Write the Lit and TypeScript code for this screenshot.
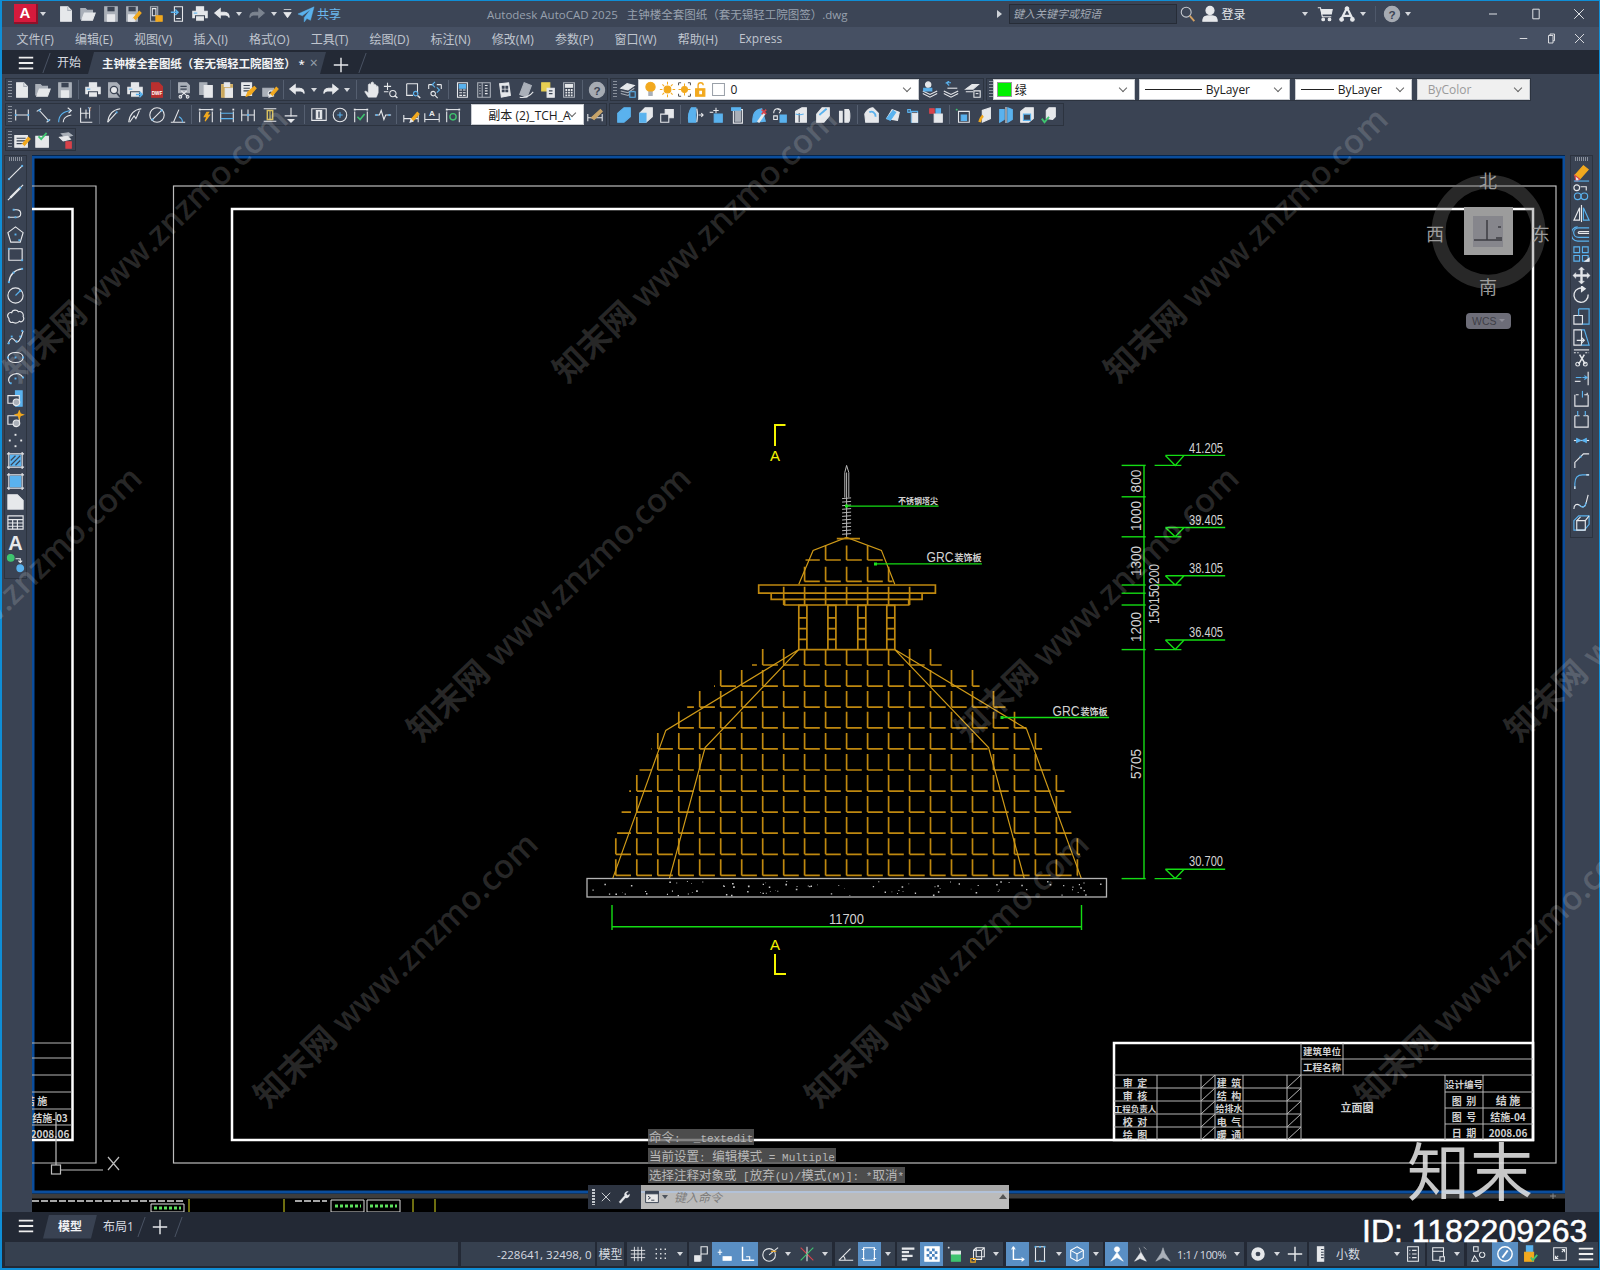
import { LitElement, html, svg, css } from 'lit'
import { customElement } from 'lit/decorators.js'

const L = '#e6e8eb'
const M = '#aab0b9'
const B = '#5ab2ee'
const O = '#f2a91e'
const R = '#d8424a'
const N = '#3fc46f'
const K = '#3a4353'

const p = (d: string, stroke = L, fill = 'none', w = 1.2) =>
  svg`<path d=${d} stroke=${stroke} fill=${fill} stroke-width=${w} />`
const c = (x: number, y: number, r: number, stroke = L, fill = 'none', w = 1.2) =>
  p(`M${x - r} ${y}a${r} ${r} 0 1 0 ${2 * r} 0a${r} ${r} 0 1 0 ${-2 * r} 0z`, stroke, fill, w)
const d = (x: number, y: number, col = B) => p(`M${x - 1} ${y - 1}h2v2h-2z`, 'none', col)
const dash = (dd: string, col = L) =>
  svg`<path d=${dd} stroke=${col} fill="none" stroke-width="1.2" stroke-dasharray="2 1.5" />`
const t = (x: number, y: number, s: string, size = 5, col = '#fff') =>
  svg`<text x=${x} y=${y} font-size=${size} fill=${col} text-anchor="middle" font-family="Liberation Sans" font-weight="700">${s}</text>`

const page = (col = L) => p('M4 2h8l4 4v12H4z', col, col)
const pen = [p('M10 15l7-8 2 2-7 8z', O, O), p('M10 15l-1 3 3-1z', L, L)]
const printer = [p('M6 2h8v5H6z', L, L), p('M2 7h16v7H2z', L, L), p('M5 12h10v6H5z', K, L), p('M3 9h4', B)]
const frame = [p('M3 6v12M17 6v12', L), d(3, 4, L), d(17, 4, L)]

const I: Record<string, unknown> = {
  new: [page(), p('M12 2v4h4', M)],
  open: [p('M2 16V4h5l2 2h6v3', M, M), p('M3 17l3-8h12l-3 8z', L, L)],
  save: [p('M3 2h14v16H3z', M, M), p('M6 2h8v5H6z', 'none', K), p('M6 11h8v7H6z', L, L)],
  saveas: [p('M3 2h12v16H3z', M, M), p('M5 2h8v5H5z', 'none', K), p('M5 11h7v7H5z', L, L), pen],
  cloudopen: [p('M5 2h8v16H5z', M, K), p('M7 4h4v8H7z', L), p('M11 12h7v6h-7z', O, O)],
  cloudsave: [p('M6 2h9v16H6z', L, K), p('M2 8h8M7 5l3 3-3 3', B, 'none', 1.6), p('M8 15h5', L)],
  print: printer,
  preview: [p('M4 2h9l3 3v13H4z', M, M), c(10, 10, 4, K, L, 1.4), p('M13 13l4 5', K, 'none', 2)],
  plot: [printer, p('M11 15h7M15 12l3 3-3 3', B, 'none', 1.6)],
  dwf: [p('M4 2h8l4 4v12H4z', '#b9302f', '#b9302f'), t(10, 15, 'DWF', 5.2)],
  cut: [p('M4 2h9l3 3v8H4z', M, M), p('M6 6h7M6 9h7', K), p('M7 11l7 6M13 11l-7 6', L), c(6, 17.5, 1.5), c(14, 17.5, 1.5)],
  copy: [p('M3 2h8v13H3z', M, M), p('M8 5h9v13H8z', L, L)],
  paste: [p('M4 4h12v14H4z', '#d6b36a', '#c8a55a'), p('M7 2h6v4H7z', L, L), p('M8 8h8v10H8z', L, L)],
  match: [p('M3 2h11v14H3z', L, L), p('M5 5h7M5 8h7M5 11h7', K), p('M8 17l2-5 7-6 2 2-6 7z', O, O)],
  matchprop: [p('M2 8h12v9H2z', M, M), c(11, 14, 3, L, K), pen],
  undo: p('M8 4L2 9l6 5v-3h6c2 0 3 1 4 3 0-4-2-6-5-6H8z', L, L),
  redo: p('M12 4l6 5-6 5v-3H6c-2 0-3 1-4 3 0-4 2-6 5-6h5z', L, L),
  redodim: p('M12 4l6 5-6 5v-3H6c-2 0-3 1-4 3 0-4 2-6 5-6h5z', '#7c8490', '#7c8490'),
  pan: p('M7 18l-4-6 1-1 3 2V4l1.500-1L10 4V2l1.500-1L13 2v2l1.500-.5L16 5v1l1.500-.5L18 7v6l-2 5z', L, L, .6),
  zoomrt: [p('M5 2v8M1 6h8M1 12h5', L), c(11, 14, 3.500), p('M13 16l3 3', L, 'none', 1.6)],
  zoomwin: [p('M3 3h12v11', L), p('M3 3v13h7', L), c(13, 14, 2.500, B), p('M15 16l3 3', L, 'none', 1.6)],
  zoomprev: [p('M3 4h5M12 4h5M3 4v5M17 4v5', L), p('M10 1l-3 3 3 3M12 7l3 3-3 3', B), c(8, 14, 2.500), p('M10 16l3 3', L)],
  props: [p('M5 2h11v16H5z', L, K), p('M7 4h7v4H7z', B, B), p('M7 10h3M11 10h3M7 13h3M11 13h3M7 16h3M11 16h3', L)],
  dc: [p('M3 2h14v16H3z', M, K), p('M8 2v16', M), p('M5 5h1M5 8h1M5 11h1M5 14h1M11 5h3M11 8h3M11 11h3M11 14h3', L)],
  palette: [p('M4 3l10-1 2 14-10 2z', L, L), p('M7 6h2v2H7zM11 6h2v2h-2zM7 10h2v2H7zM11 10h2v2h-2z', K, K)],
  sheet: [p('M3 15L8 2l8 3-5 13z', M, M), p('M3 18c6 1 11-1 15-6', L)],
  markup: [p('M3 2h9v9H3z', '#e8cf52', '#e8cf52'), p('M9 8h8v10H9z', L, L), p('M11 11h4M11 14h4', K)],
  calc: [p('M4 2h12v16H4z', M, K), p('M6 4h8v3H6z', L, L), p('M6 9h2v2H6zM9 9h2v2H9zM12 9h2v2h-2zM6 12h2v2H6zM9 12h2v2H9zM12 12h2v2h-2zM6 15h2v2H6zM9 15h2v2H9zM12 15h2v2h-2z', 'none', L)],
  help: [c(10, 10, 8.500, '#a6abb3', '#a6abb3'), t(10, 15, '?', 13, K)],
  layerprops: [p('M2 8l7-5 8 2-7 5z', L, L), p('M2 11l8 2 7-5', M), p('M2 14l8 2 7-5', M), p('M12 12h6v6h-6z', B, K)],
  dimlin: [p('M3 4v12M17 4v12M3 10h14', L), d(3, 10), d(17, 10)],
  dimali: [p('M3 6l5-3M14 18l4-3M6 5l10 11', L), d(6, 5), d(16, 16)],
  dimarc: [p('M3 18c0-8 4-12 14-13', B), p('M8 18c0-4 3-7 9-8', L), p('M13 2l4 3-3 3', L)],
  dimord: [p('M4 2v16h13M4 8h9M10 4v10M14 4v10', L), t(14, 6, 'Y', 5, L)],
  dimrad: [p('M3 18C4 9 9 4 17 3', L), p('M3 18L13 7', L), d(13, 7)],
  dimjog: [p('M3 18C4 9 9 4 17 3', L), p('M4 18l5-7 2 3 4-9', L)],
  dimdia: [c(10, 10, 8), p('M4 16L16 4', L), d(5, 15), d(15, 5)],
  dimang: [p('M2 18h16M5 18L11 4', L), p('M15 18c0-3-2-5-4-6', B)],
  dimqk: [frame, p('M3 4h14', L), p('M11 7l-3 5h3l-2 5 5-7h-3l2-3z', O, O)],
  dimbase: [frame, p('M3 8h14M3 14h14', B)],
  dimcont: [p('M3 4v13M10 4v13M17 4v13M3 10h14', L), d(10, 10)],
  dimspace: [p('M3 3h14M3 17h14', L), p('M7 5h6v10H7z', '#d9c05e', 'none', 1.6), p('M10 5v10', '#d9c05e')],
  dimbreak: [p('M10 2v10M3 11h14M7 15h6l-3 3z', L, L)],
  tol: [p('M2 3h16v13H2z', L), p('M7 5h6v9H7z', L, L), p('M10 6v7', K, 'none', 1.500)],
  center: [c(10, 10, 7.500), p('M10 7v6M7 10h6', B)],
  inspect: [frame, p('M3 4h14', L), p('M6 12l3 3 5-6', N, 'none', 1.800)],
  jog: [p('M1 10h5l2-5 3 10 2-5h6', L), d(3, 10), d(17, 10)],
  dimedit: [p('M2 10v8M18 10v8M2 14h16', L), pen],
  dimtedit: [p('M2 8v10M18 8v10M2 15h16', L), t(10, 11, 'A', 9, L)],
  dimupd: [frame, p('M3 4h14', L), c(10, 12, 3.500, N, 'none', 1.500)],
  dimstyle: [p('M2 9v8M18 9v8M2 13h16', L), p('M6 13l10-9 2 2-9 9z', '#c9a56a', '#c9a56a')],
  wrench: p('M3 17l8-9c-1-3 1-6 5-6l-3 3 2 3 3-2c0 4-3 6-6 5l-7 8z', L, L, .6),
  solid1: [p('M3 18V8l7-6h7v10l-7 6z', B, B)],
  solid2: [p('M3 18V8l6-6h8v10l-7 6z', L, L), p('M3 18V8h7v10z', B, B)],
  solid3: [p('M8 13V4h9v9z', L, L), p('M3 18V9h9v9z', L, K)],
  sect1: [p('M3 18c-1-8 0-12 3-16h5v16z', B, B), p('M12 3c1 4 1 10 0 15', L), p('M14 10h5M17 8l2 2-2 2', L)],
  sect2: [p('M10 2v6M7 5h6', L), p('M8 9h9v9H8z', B, B), p('M3 7h4', L)],
  sect3: [p('M6 4h10v15H6z', L), p('M4 2h10v3H4z', B, B), p('M8 6h6v11H8z', M, M)],
  sect4: [p('M3 18C3 8 6 4 13 3l4 14z', B, B), p('M9 18l7-10', L, L, 3), p('M13 4l5 5M18 4l-5 5', R, 'none', 1.8)],
  sect5: [p('M3 8c0-6 7-6 8-3', L), p('M7 3l4 2-2 3', L), p('M10 10h7v8h-7z', B, B), p('M3 11h4v4H3z', L)],
  sect6: [p('M4 18V6l7-4h5v16z', L, L), p('M8 18V8', K), p('M4 9c3 1 6 1 9 0', B)],
  sect7: [p('M3 18V9l6-7h8v9l-6 7z', L, L), p('M6 10l8-7', B, 'none', 2)],
  sect8: [p('M5 18V6h3v12zM11 18V4h4c2 2 2 12 0 14z', L, L)],
  sect10: [p('M3 18L2 9c2-4 5-7 9-7l6 6v10z', L, L), p('M7 7c3-2 7 0 7 5', B, 'none', 2)],
  sect11: [p('M3 14l6-10 8 3-2 9z', L, L), p('M3 14l7-9 3 2-6 9z', B, B)],
  sect12: [p('M3 7V4h3v3zM7 6h7v12H7z', B), p('M8 8h6v10H8z', L, L), p('M3 7h3', B)],
  sect13: [p('M3 3h5v5H3z', R, R), p('M10 3h5v5h-5z', B, B), p('M8 9h9v9H8z', L, L)],
  face1: [p('M2 4h2M3 3v2', N), p('M5 6h12v12H5z', L, K), p('M8 10h6v6H8z', B, B)],
  face2: [p('M7 18V5l9-3v12z', L, L), p('M4 18c1-4 2-6 4-7', O, 'none', 3)],
  face3: [p('M3 4v14l5-3V4zM12 2v16l5-3V4z', B, B), p('M10 1v18', L)],
  face4: [p('M3 6l5-4h9v12l-5 4H3z', L, L), p('M6 9h8v7H6z', B, K)],
  face5: [p('M7 14V5l3-3h7v10l-3 3z', L, L), p('M2 14l3 4 5-6', N, 'none', 2)],
  edit1: [p('M2 5h14v13H2z', L, L), p('M4 8h10M4 11h10M4 14h10', K), pen],
  edit2: [p('M2 6h7v12H2zM9 6h7v12H9z', L, L), p('M5 6l3 3 6-7', N, 'none', 2)],
  edit3: [p('M6 3l8-1 4 3-8 2z', M, M), p('M4 7l9-1 3 3-8 2z', L, L), p('M11 12h6v7h-6z', R, R)],
  line: [p('M3 17L17 3', L), d(3, 17), d(17, 3)],
  xline: [p('M2 18l4-4M14 6l4-4', L), p('M5 15l10-10', L, 'none', 2.4), d(5, 15, L), d(15, 5, B)],
  pline: [p('M2 14h9c6 0 6-8 0-8H8', L), d(3, 14), d(10, 14), d(8, 6)],
  polygon: [p('M10 2l8 6-3 10H5L2 8z', L), d(10, 10), d(14, 16)],
  rect: [p('M3 4h14v12H3z', L), d(3, 4), d(17, 16)],
  arc: [p('M3 17C4 9 9 4 17 3', L), d(3, 17), d(8, 7), d(17, 3)],
  circle: [c(10, 10, 8), p('M10 10l5-5', B), d(15, 5)],
  cloud: p('M3 12c-3-3 0-7 3-6 1-4 6-3 7-1 3-1 6 2 5 5 2 3-1 7-4 5-2 3-6 2-7 1-2 1-4-1-4-4z', L),
  spline: [p('M2 17c3-9 6-6 8-3s6-2 8-11', L), d(3, 16), d(6, 9), d(11, 14), d(15, 9), d(17, 3)],
  ellipse: [p('M2 10c0-7 16-7 16 0s-16 7-16 0z', L), d(2, 10), d(18, 10), d(10, 10)],
  ellarc: [p('M4 15c-4-6 3-11 9-10 3 1 4 2 5 4', L), d(5, 15), d(18, 9), d(10, 10)],
  insert: [p('M10 2h7v16h-7z', B, B), p('M2 7h12v8H2z', L, K), c(11, 14, 3.500, L, M)],
  block: [p('M2 6h12v9H2z', L, K), c(11, 14, 3.500, L, M), p('M14 1l1 3 3 1-3 1-1 3-1-3-3-1 3-1z', O, O)],
  point: [d(10, 4, L), d(4, 10, L), d(16, 10, L), d(10, 16, L)],
  hatch: [p('M3 1v18M17 1v18M1 3h18M1 17h18', L), p('M4 4h12v12H4z', 'none', B), p('M5 15L15 5M5 10l5-5M10 15l5-5', K)],
  gradient: [p('M3 1v18M17 1v18M1 3h18M1 17h18', L), p('M4 4h12v12H4z', 'none', B)],
  region: p('M2 3h10l6 6v9H2z', L, L),
  table: [p('M2 3h16v14H2z', L), p('M2 7h16M2 10.500h16M2 14h16M7 7v10M12 7v10', L)],
  mtext: t(10, 18, 'A', 21, L),
  addsel: [c(5, 4, 3.500, N, N), p('M10 5h5v4M13 7l2 2 2-2', L), c(15, 15, 3.500, B, B)],
  erase: [p('M3 13l9-10 5 4-9 10z', O, O), p('M3 13l5 4-2 2H4z', R, L), p('M2 19h16', B)],
  copyobj: [c(5, 5, 3), p('M9 4h6v4', L), c(6, 14, 3.500, B), c(13, 14, 3.500, B)],
  mirror: [p('M2 17L8 4v13z', L), p('M12 4l6 13h-6z', B), p('M10 1v18', L)],
  offset: [p('M18 3H7c-7 0-7 10 0 10h11', B), p('M18 7H8c-2 0-2 2 0 2h10', L), p('M18 17H6c-9 0-9-15 0-15', B)],
  array: [p('M2 2h6v6H2zM11 2h6v6h-6zM2 11h6v6H2zM11 11h6v6h-6z', B), p('M14 17h4v-3z', L, L)],
  move: p('M10 1l3 3h-2v5h5V7l3 3-3 3v-2h-5v5h2l-3 3-3-3h2v-5H4v2l-3-3 3-3v2h5V4H7z', L, L, .5),
  rotate: [p('M13 3A7.500 7.500 0 1 0 17 9', L, 'none', 1.4), p('M10 0l4 3-4 3z', L, L)],
  scale: [p('M2 9h9v9H2z', L), p('M7 2h11v16H11', B), p('M7 2v7', B)],
  stretch: [p('M2 2h8v16H2z', L), p('M10 2h3l5 16h-8', B), p('M5 13h8M10 10l3 3-3 3', L)],
  trim: [p('M2 2h16', L), dash('M2 5h5M14 5h4', L), p('M8 7l6 10M13 7L7 17', L, 'none', 1.6), c(6, 17, 2), c(14, 17, 2)],
  extend: [p('M17 3v14', L), p('M3 13h6', L), p('M4 9h6M11 9l5 0M13 7l3 2-3 2', B)],
  breakp: [p('M4 6h3M13 6h3V4', L), p('M3 6v12h14V6', L), p('M11 2v7', B)],
  breakl: [p('M3 6h5M12 6h5M3 6v12h14V6', L), p('M6 6V1M14 6V1', B)],
  join: [p('M2 10h16', L), p('M5 8l4 2-4 2zM15 8l-4 2 4 2z', B, B)],
  chamfer: [p('M18 3h-6L3 12v6', L), d(9, 6, B)],
  fillet: [p('M18 3h-7C6 3 3 6 3 12v6', B), p('M15 3h3M3 15v3', L)],
  blend: [p('M2 18c0-5 3-6 6-4 3 3 6 2 7-3l2-8', L), p('M8 14c3 3 6 2 7-3', B)],
  explode: [p('M2 8l5-5h11v9l-5 6H2z', B), p('M5 8h9v10H5z', L), p('M5 8l4-4M14 8l4-5', L)],
  bulb: [c(10, 7, 5.500, O, O), p('M8 13h4v4H8z', M, M)],
  sun: [c(10, 10, 4, O, O), p('M10 1v3M10 16v3M1 10h3M16 10h3M4 4l2 2M14 14l2 2M16 4l-2 2M6 14l-2 2', O)],
  freeze: [p('M3 2h3M14 2h3M3 18h3M14 18h3M3 2v3M17 2v3M3 15v3M17 15v3', '#555'), c(10, 10, 3.500, O, O), p('M10 3v3M10 14v3M3 10h3M14 10h3', O)],
  lock: [p('M3 9h11v9H3z', O, O), p('M6 9V5c0-4 6-4 6 0', O, 'none', 1.6), p('M8 12h2v3H8z', '#fff', '#fff')],
  swatch: p('M3 3h14v14H3z', '#9aa0a8', '#fff'),
  matchlayer: [p('M2 14l8 4 8-4M2 11l8 4 8-4', L), p('M3 8h9v3H3z', B, B), c(8, 4, 3, L, L)],
  prevlayer: [p('M2 14l8 4 8-4M2 11l8 4 8-4', L), p('M10 2H5l3-2M5 2l3 3', B), p('M6 8h11', L)],
  layerstate: [p('M2 9l7-5h7l-6 5zM2 12h8', L, L), p('M11 11h7v7h-7z', L, K), p('M13 14h3', L)],
  search: [c(8, 8, 5.500, '#c5c9cf'), p('M12 12l5 6', '#d3a060', 'none', 2)],
  user: [c(10, 6, 4.500, L, L), p('M2 18c0-6 4-6 8-6s8 0 8 6z', L, L)],
  cart: [p('M2 3h3l2 10h10', L), p('M5 5h13l-1 5H6', L, L), c(8, 16, 1.500, L, L), c(15, 16, 1.500, L, L)],
  alogo: [p('M10 3L3 17M10 3l7 14M6 12h8', L, 'none', 2.400), c(10, 4, 2, L, L), c(4, 16, 2, L, L), c(16, 16, 2, L, L)],
  custom: p('M5 4h10M5 8h10l-5 7z', L, L, 1),
  share: p('M19 2L1 10l5 2 9-7-7 9v5l3-4 4 2z', B, B, .5),
  hamb: p('M2 4h16M2 10h16M2 16h16', '#eee', 'none', 2),
  min: p('M5 10h10', L, 'none', 1.2),
  max: p('M6 4h8v12H6z', L, 'none', 1.2),
  close: p('M4 4l12 12M16 4L4 16', L, 'none', 1.2),
  restore: [p('M8 6V4h6v9h-2', L), p('M6 6h6v10H6z', L)],
  plus: p('M10 2v16M2 10h16', L, 'none', 1.600),
  grid: p('M6 2v16M10 2v16M14 2v16M2 6h16M2 10h16M2 14h16', L, 'none', 1),
  snapgrid: p('M4 4h1.500v1.500H4zM9 4h1.500v1.500H9zM14 4h1.500v1.500H14zM4 9h1.500v1.500H4zM9 9h1.500v1.500H9zM14 9h1.500v1.500H14zM4 14h1.500v1.500H4zM9 14h1.500v1.500H9zM14 14h1.500v1.500H14z', 'none', L),
  mdlspace: [p('M3 12h6v6H3z', L, L), p('M10 2h7v8h-7z', L), p('M10 10v8', L)],
  snapinf: [p('M3 8h5M5.500 5v6', '#fff'), p('M9 13h9v4H9z', '#fff', '#fff')],
  ortho: [p('M5 2v15h13', '#fff', 'none', 1.6), p('M9 13h4v4', '#fff')],
  polar: [c(9, 11, 7), p('M9 11l10-8', L), p('M11 7h6', O)],
  iso: [p('M3 3l14 14', R), p('M10 2v16', L), p('M3 17l14-14', N)],
  angle: p('M2 17h16M2 17L15 4M9 17c0-3-1-4-2-5', L),
  dyn: [p('M4 3h12v14H4z', '#fff'), p('M2 5h3M2 15h3M15 5h3M15 15h3', '#fff')],
  lwt: p('M2 4h14M2 8h8M2 12h12M2 16h6', L, 'none', 2.4),
  transp: [p('M2 2h16v16H2z', '#fff', '#fff'), p('M4 4h3v3H4zM10 4h3v3h-3zM7 7h3v3H7zM13 7h3v3h-3zM4 10h3v3H4zM10 10h3v3h-3zM7 13h3v3H7zM13 13h3v3h-3z', 'none', '#4a82bd')],
  selcyc: [p('M6 7h10v11H6z', N, N), p('M2 3h2M3 2v2', L), p('M6 7h10v3H6z', L, L)],
  orbit3: [p('M8 3h9v10H8zM5 6h9v10H5zM8 3L5 6M17 3l-3 3', L), p('M2 15h5v4H2z', O)],
  ucsdyn: [p('M6 2v14h12', '#fff', 'none', 1.6), p('M6 2l2 3M6 2L4 5M18 16l-3-2M18 16l-3 2', '#fff')],
  gizmo1: [p('M5 2h10v16H5z', L), d(5, 2), d(15, 2), d(5, 18), d(15, 18), d(10, 2), d(10, 18)],
  gizmo2: [p('M10 2l7 4v8l-7 4-7-4V6z', '#fff'), p('M3 6l7 4 7-4M10 10v8', '#fff')],
  anno1: p('M10 2c2 0 3 1 3 3s-2 3-3 3-3-1-3-3 1-3 3-3zM10 8L3 18l7-4 7 4z', '#fff', '#fff', .6),
  anno2: p('M9 3l2 5-7 10 6-3 7 3-6-10M14 2l3 3', L, L, .6),
  anno3: p('M10 3l2 6 6 9-8-4-8 4 6-9z', M, M, .6),
  gear: [c(10, 10, 6, L, L, 3), c(10, 10, 2, K, K)],
  ruler: [p('M6 2h7v16H6z', L, L), p('M10 5h3M10 8h3M10 11h3M10 14h3', K)],
  quick: [p('M4 2h12v16H4z', L), p('M6 6h1M9 6h5M6 10h1M9 10h5M6 14h1M9 14h5', L)],
  ws: [p('M3 3h12v14H3z', L), p('M3 7h12', L), p('M11 13h5v5h-5z', L, K)],
  term: [p('M2 3h16v14H2z', '#3a4353', '#e8e8e8'), p('M2 3h16v3H2z', '#3a4353', '#3a4353'), p('M5 9l3 2-3 2M9 14h4', '#3a4353')],
  mon: [p('M4 2h5v5H4zM13 8a3 3 0 1 0 1 0', L), p('M5 12l-3 6h7z', L)],
  perf: [c(10, 10, 8, '#fff', 'none', 1.600), p('M7 14l6-8', '#fff', 'none', 2)],
  isolate: [p('M6 1h7v9H6z', B, B), p('M4 8h10v10H4z', O, O), p('M11 14l2 3 5-6', N, 'none', 2)],
  clean: [p('M3 3h14v14H3z', L), p('M8 12l-3 3M5 12v3h3M12 8l3-3M12 5h3v3', L)],
}

interface Row {
  readonly y: number
  readonly min: number
  readonly max: number
}

const zx = (v: number): number => +(560 + v / 2.24).toFixed(1)
const zy = (v: number): number => +(410 + v / 2.8).toFixed(1)

const lPath = (rows: readonly Row[], h: number): string => {
  const out: string[] = []
  for (const r of rows) {
    for (let k = -10; k < 15; k++) {
      const vx = 548 + 47 * k
      const a = Math.max(vx, r.min)
      const b = Math.min(vx + 34, r.max)
      if (a < b) out.push(`M${zx(a)} ${zy(r.y)}H${zx(b)}`)
      if (vx >= r.min && vx <= r.max) out.push(`M${zx(vx)} ${zy(r.y - h)}V${zy(r.y)}`)
    }
  }
  return out.join('')
}

const DOME_ROWS: readonly Row[] = [
  { y: 714, min: 430, max: 855 },
  { y: 773, min: 345, max: 940 },
  { y: 832, min: 285, max: 998 },
  { y: 890, min: 265, max: 1045 },
  { y: 949, min: 205, max: 1080 },
  { y: 1008, min: 178, max: 1100 },
  { y: 1067, min: 155, max: 1130 },
  { y: 1126, min: 138, max: 1145 },
  { y: 1185, min: 128, max: 1158 },
  { y: 1244, min: 124, max: 1165 },
  { y: 1303, min: 124, max: 1160 },
]
const CAP_ROWS: readonly Row[] = [
  { y: 420, min: 550, max: 735 },
  { y: 480, min: 548, max: 745 },
]

const poly = (pts: ReadonlyArray<readonly [number, number]>): string =>
  pts.map(([x, y], i) => `${i ? 'L' : 'M'}${zx(x)} ${zy(y)}`).join('')

const box = (a: number, b: number, y1: number, y2: number): string =>
  `M${zx(a)} ${zy(y1)}H${zx(b)}V${zy(y2)}H${zx(a)}Z`

const ledgeTicks = (): string => {
  let s = ''
  for (let k = 0; k < 7; k++) {
    const x = 501 + 47 * k
    s += `M${zx(x)} ${zy(495)}V${zy(546)}`
  }
  return s
}

const columnPath = (): string => {
  let s = `M${zx(535)} ${zy(671)}H${zx(750)}`
  for (const x of [535, 600, 667, 732]) {
    s += box(x, x + 18, 547, 671)
    for (const y of [582, 612, 642]) s += `M${zx(x)} ${zy(y)}H${zx(x + 18)}`
  }
  return s
}

const spirePath = (): string => {
  let s = `M${zx(642)} ${zy(155)}L${zx(638)} ${zy(175)}V${zy(245)}M${zx(642)} ${zy(155)}L${zx(647)} ${zy(175)}V${zy(245)}M${zx(642)} ${zy(175)}V${zy(355)}`
  for (let y = 248; y < 355; y += 10) s += `M${zx(632)} ${zy(y)}L${zx(652)} ${zy(y - 2)}`
  return s
}

const speckles = (): string => {
  let seed = 71
  const next = () => (seed = (seed * 1103 + 12345) % 65536) / 65536
  let s = ''
  for (let i = 0; i < 90; i++) {
    const x = 590 + next() * 512
    const y = 881 + next() * 14
    const w = 0.6 + next() * 1.1
    s += `M${x.toFixed(1)} ${y.toFixed(1)}h${w.toFixed(1)}v${w.toFixed(1)}h${(-w).toFixed(1)}z`
  }
  return s
}

const cadText = (x: number, y: number, s: string, len: number, size = 14, rot = false) =>
  svg`<text class="cad" x=${x} y=${y} font-size=${size} textLength=${len} lengthAdjust="spacingAndGlyphs"
    transform=${rot ? `rotate(-90 ${x} ${y})` : ''} text-anchor="middle" dominant-baseline="central">${s}</text>`

const cjk = (x: number, y: number, s: string, size = 10) =>
  svg`<text class="tbt" x=${x} y=${y} font-size=${size}>${s}</text>`

const ELEV: ReadonlyArray<readonly [string, number, number]> = [
  ['41.205', 127, 155],
  ['39.405', 329, 355],
  ['38.105', 464, 490],
  ['36.405', 644, 671],
  ['30.700', 1286, 1312],
]

const WATERMARKS: ReadonlyArray<readonly [number, number]> = [
  [154, 253], [703, 253], [1254, 253],
  [8, 612], [557, 612], [1105, 612], [1655, 612],
  [404, 978], [955, 978], [1505, 978],
]

const TITLE_GRID =
  'M1301 1043V1140M1343 1043V1075M1301 1059H1533M1114 1075H1533' +
  'M1114 1088H1301M1114 1101H1301M1114 1114H1301M1114 1127H1301' +
  'M1157 1075V1140M1201 1075V1140M1215 1075V1140M1243 1075V1140M1287 1075V1140' +
  'M1445 1075V1140M1483 1075V1140M1445 1092H1533M1445 1108H1533M1445 1124H1533' +
  'M1201 1088L1215 1075M1201 1101L1215 1088M1201 1114L1215 1101M1201 1127L1215 1114M1201 1140L1215 1127' +
  'M1287 1088L1301 1075M1287 1101L1301 1088M1287 1114L1301 1101M1287 1127L1301 1114M1287 1140L1301 1127'

const drawing = () => svg`
  <rect x="32" y="155" width="1533" height="1057" fill="#000" />
  <path d="M32 1196H1565" stroke="#3d3d3d" stroke-width="5" />
  <path d="M1553 1193v6M1550 1196h6" stroke="#888" />
  <path d="M32 1201H184M295 1201H327" stroke="#ddd" stroke-width="1.500" stroke-dasharray="7 2" />
  <path d="M151 1204h33v8h-33zM331 1200h33v12h-33zM367 1200h33v12h-33z" stroke="#ddd" fill="none" />
  <path d="M154 1208h27M335 1206h26M370 1206h27" stroke="#5de05d" stroke-width="3" stroke-dasharray="3 2" />
  <path d="M189 1199v13M284 1199v13M413 1199v13M435 1199v13" stroke="#dddd20" />
  <rect x="33" y="157" width="1531" height="1035" fill="none" stroke="#0a4d9c" stroke-width="3" />

  <g clip-path="url(#vp)">
    <rect x="173.500" y="186" width="1382.500" height="977" class="thin" />
    <rect x="232" y="209" width="1301" height="931" class="thick" />
    <path d="M20 186H96V1163H20" class="thin" />
    <path d="M20 209H72.500V1140H20" class="thick" />
    <path class="thinner" d="M20 1043H72M20 1058H72M20 1075H72M20 1092H72M20 1109H72M20 1125H72" />
    ${cjk(36, 1100, '结 施', 10)}
    ${cjk(50, 1117, '结施-03', 10)}
    ${cjk(50, 1133, '2008.06', 10)}
    <path class="thin" d="M56 1112V1165M61 1170H103" />
    <rect x="51.500" y="1165" width="9" height="9" class="thin" />
    <path class="thin" d="M108 1157l11 13M119 1157l-11 13" />

    <rect x="1114" y="1043" width="419" height="97" class="thick" stroke-width="2" />
    <path class="thinner" d=${TITLE_GRID} />
    ${cjk(1322, 1051, '建筑单位', 9.500)}
    ${cjk(1322, 1067, '工程名称', 9.500)}
    ${['审  定', '审  核', '工程负责人', '校  对', '绘  图'].map((s, i) => cjk(1135, 1082 + i * 13, s, i === 2 ? 8.5 : 10))}
    ${['建  筑', '结  构', '给排水', '电  气', '暖  通'].map((s, i) => cjk(1229, 1082 + i * 13, s, i === 2 ? 9 : 10))}
    ${cjk(1357, 1107, '立面图', 11)}
    ${cjk(1464, 1084, '设计编号', 9.500)}
    ${cjk(1464, 1100, '图  别', 10)}
    ${cjk(1464, 1116, '图  号', 10)}
    ${cjk(1464, 1132, '日  期', 10)}
    ${cjk(1508, 1100, '结 施', 11)}
    ${cjk(1508, 1116, '结施-04', 10)}
    ${cjk(1508, 1132, '2008.06', 10)}

    <!-- section marks -->
    <path d="M785.500 425H775V446M775 954V974H786" stroke="#f4f400" stroke-width="2" fill="none" />
    <text class="sec" x="775" y="461">A</text>
    <text class="sec" x="775" y="950">A</text>

    <!-- dome -->
    <path d=${lPath(DOME_ROWS, 45)} class="brick" />
    <path d=${lPath(CAP_ROWS, 41)} class="brick" />
    <path d=${ledgeTicks()} class="brick" />
    <path d=${columnPath()} class="brick" />
    <path class="brick" d=${box(445, 841, 490, 513) + box(473, 811, 513, 530) + box(503, 781, 530, 546)} />
    <path class="roof" d=${poly([[535, 488], [567, 393], [642, 357], [720, 393], [750, 488]])} />
    <path class="roof" d=${poly([[118, 1312], [237, 897], [535, 671]]) + poly([[245, 1312], [325, 945], [535, 671]])} />
    <path class="roof" d=${poly([[750, 671], [1045, 893], [1168, 1312]]) + poly([[750, 671], [960, 945], [1040, 1312]])} />
    <path d=${spirePath()} stroke="#b8b8b8" stroke-width="1" fill="none" />
    <path d=${`M${zx(620)} ${zy(360)}H${zx(672)}`} class="brick" />

    <!-- slab -->
    <rect x="587" y="878.500" width="519.500" height="18.500" fill="none" stroke="#b4b4b4" stroke-width="1.300" />
    <path d=${speckles()} fill="#c4c4c4" />

    <!-- dims -->
    <path class="dim" d=${`M1144 465V879M612 905V930M1081.500 905V930M612 926.800H1081.500`} />
    ${[155, 243, 355, 490, 513, 546, 671, 1312].map(
      (y) => svg`<path class="dim" d=${`M${zx(1258)} ${zy(y)}H${zx(1312)}`} />`
    )}
    ${ELEV.map(
      ([label, top, base]) => svg`
        <path class="dim" d=${`M${zx(1356)} ${zy(top)}H${zx(1490)}M${zx(1356)} ${zy(top)}L${zx(1378)} ${zy(base)}L${zx(1398)} ${zy(top)}M${zx(1332)} ${zy(base)}H${zx(1392)}`} />
        ${cadText(1206, zy(top - 22), label, 34)}
      `
    )}
    ${cadText(1136, 481, '800', 23, 14, true)}
    ${cadText(1136, 516, '1000', 30, 14, true)}
    ${cadText(1136, 561, '1300', 30, 14, true)}
    ${cadText(1136, 627, '1200', 30, 14, true)}
    ${cadText(1136, 764, '5705', 30, 14, true)}
    ${cadText(1154, 594, '150150200', 60, 14, true)}
    ${cadText(846.500, 919, '11700', 35)}

    <path class="dim" d=${`M${zx(642)} ${zy(269)}H${zx(848)}M${zx(707)} ${zy(431)}H${zx(945)}M${zx(990)} ${zy(861)}H${zx(1230)}`} />
    <path d="M845 504.500h3v3h-3zM874 562.500h3v3h-3zM1000.500 716h3v3h-3z" fill="#1de01d" />
    ${cjk(918, 500, '不锈钢塔尖', 8)}
    ${cadText(940, 556.500, 'GRC', 27, 14)}
    ${cjk(968, 557.500, '装饰板', 9)}
    ${cadText(1066, 711, 'GRC', 27, 14)}
    ${cjk(1094, 711.500, '装饰板', 9)}

    <!-- view cube -->
    <circle cx="1488.500" cy="231.700" r="50" fill="none" stroke="rgba(110,110,110,.36)" stroke-width="14" />
    <rect x="1464" y="207" width="49" height="48" fill="#9c9c9c" />
    <rect x="1473" y="216" width="30" height="31" fill="#86868c" />
    <path d="M1487 220v20M1474 240h28M1498 227h3M1496 238h6" stroke="#3c3c42" stroke-width="1.500" fill="none" />
    ${['北:1488:180', '南:1488:286', '西:1435:233', '东:1541:233'].map((s) => {
      const [g, x, y] = s.split(':')
      return svg`<text class="cube" x=${x} y=${y}>${g}</text>`
    })}
    <rect x="1466" y="313" width="45" height="16" rx="4" fill="#6d6d78" />
    <text x="1472" y="325" font-size="10.500" fill="#3e3e46" font-family="Liberation Sans">WCS</text>
    <path d="M1499 319h6l-3 3z" fill="#8e8e98" />
  </g>
`

const STATUS: ReadonlyArray<readonly string[]> = [
  ['grid', 'snapgrid', 'v'],
  ['mdlspace', '*snapinf', '*ortho', 'polar', 'v', 'iso', 'v'],
  ['angle', '*dyn', 'v'],
  ['lwt', '*transp', 'selcyc', 'orbit3', 'v'],
  ['*ucsdyn', 'gizmo1', 'v', '*gizmo2', 'v'],
]

const TOP1A = ['new', 'open', 'save', '|', 'print', 'preview', 'plot', 'dwf', '|', 'cut', 'copy', 'paste', 'match', 'matchprop', '|', 'undo', 'v', 'redo', 'v', '|', 'pan', 'zoomrt', 'zoomwin', 'zoomprev', '|', 'props', 'dc', 'palette', 'sheet', 'markup', 'calc', '|', 'help']
const TOP2A = ['dimlin', 'dimali', 'dimarc', 'dimord', '|', 'dimrad', 'dimjog', 'dimdia', 'dimang', '|', 'dimqk', 'dimbase', 'dimcont', 'dimspace', 'dimbreak', '|', 'tol', 'center', 'inspect', 'jog', '|', 'dimedit', 'dimtedit', 'dimupd']
const TOP2B = ['solid1', 'solid2', 'solid3', '|', 'sect1', 'sect2', 'sect3', 'sect4', 'sect5', 'sect6', 'sect7', 'sect8', '|', 'sect10', 'sect11', 'sect12', 'sect13', '|', 'face1', 'face2', 'face3', 'face4', 'face5']
const LEFT = ['line', 'xline', 'pline', 'polygon', 'rect', 'arc', 'circle', 'cloud', 'spline', 'ellipse', 'ellarc', 'insert', 'block', 'point', 'hatch', 'gradient', 'region', 'table', 'mtext', 'addsel']
const RIGHT = ['erase', 'copyobj', 'mirror', 'offset', 'array', 'move', 'rotate', 'scale', 'stretch', 'trim', 'extend', 'breakp', 'breakl', 'join', 'chamfer', 'fillet', 'blend', 'explode']
const MENUS = ['文件(F)', '编辑(E)', '视图(V)', '插入(I)', '格式(O)', '工具(T)', '绘图(D)', '标注(N)', '修改(M)', '参数(P)', '窗口(W)', '帮助(H)', 'Express']
const HISTORY = ['命令:  _textedit', '当前设置: 编辑模式 = Multiple', '选择注释对象或 [放弃(U)/模式(M)]: *取消*']

const ic = (name: string, cls = '') => html`<svg class="ic ${cls}" viewBox="0 0 20 20">${I[name]}</svg>`
const caret = () => html`<span class="caret"></span>`
const tool = (name: string) => {
  if (name === '|') return html`<span class="sep"></span>`
  if (name === 'v') return caret()
  return html`<span class="cell">${ic(name)}</span>`
}
const stat = (name: string, wide = false) => {
  if (name === 'v') return caret()
  const on = name.startsWith('*')
  return html`<span class="scell ${on ? 'on' : ''} ${wide ? 'wide' : ''}">${ic(on ? name.slice(1) : name)}</span>`
}
const chev = () => html`<span class="chev"></span>`
// mono latin stays narrow while the han runs are set larger, as in the AutoCAD history lines
const histLine = (s: string) =>
  s.split(/([\u4e00-\u9fff]+)/).map((run, i) => (i % 2 ? html`<b>${run}</b>` : run))

@customElement('app-root')
export class AppRoot extends LitElement {
  static override styles = css`
    :host {
      display: block;
      position: relative;
      width: 1600px;
      height: 1270px;
      overflow: hidden;
      font-family: 'Open Sans', 'Noto Sans CJK SC', sans-serif;
      font-size: 12px;
      color: #c8cdd5;
    }
    .win {
      box-sizing: border-box;
      width: 1600px;
      height: 1270px;
      display: flex;
      flex-direction: column;
      background: #3a4353;
      border: solid #0f8ed6;
      border-width: 1px 1px 2px 2px;
    }
    .ic {
      display: block;
      width: 18px;
      height: 18px;
    }
    .title {
      height: 26px;
      flex: none;
      display: flex;
      align-items: center;
      background: #3c4556;
    }
    .logo {
      width: 22px;
      height: 18px;
      margin-left: 12px;
      background: #d61a3c;
      border-right: 2px solid #8e1129;
      border-bottom: 2px solid #8e1129;
      color: #fff;
      font: 700 15px/18px 'Liberation Sans', sans-serif;
      text-align: center;
    }
    .qat {
      width: 22.3px;
      display: flex;
      justify-content: center;
      flex: none;
    }
    .qat.tight {
      width: 15px;
    }
    .caret {
      flex: none;
      width: 12px;
      display: flex;
      justify-content: center;
    }
    .caret::after {
      content: '';
      border: 3px solid transparent;
      border-top: 4px solid #d5d8dd;
      border-bottom: 0;
    }
    .narrow {
      width: 10px;
    }
    .ml7 {
      margin-left: 7px;
    }
    .ml4 {
      margin-left: 4px;
    }
    .sharetxt {
      width: 30px;
      color: #6bb8ee;
      flex: none;
    }
    .apptitle {
      flex: none;
      width: 510px;
      margin-left: 140px;
      font-size: 11.5px;
      color: #98a1ae;
      white-space: pre;
    }
    .tri {
      flex: none;
      width: 8px;
      margin-right: 4px;
      border-left: 5px solid #cfd3d9;
      border-top: 4px solid transparent;
      border-bottom: 4px solid transparent;
      box-sizing: border-box;
      height: 8px;
    }
    .search {
      flex: none;
      width: 168px;
      height: 20px;
      box-sizing: border-box;
      padding-left: 3px;
      background: #333c4b;
      border: 1px solid #262c37;
      font-style: italic;
      font-size: 11px;
      line-height: 17px;
      color: #a3aab5;
    }
    .login {
      width: 78px;
      flex: none;
      color: #e3e6ea;
    }
    .vsep {
      flex: none;
      width: 1px;
      height: 16px;
      margin: 0 5px 0 7px;
      background: #4e586a;
    }
    .winbtn {
      flex: none;
      width: 30px;
      display: flex;
      justify-content: center;
      margin-left: 13px;
    }
    .winbtn .ic {
      width: 16px;
      height: 16px;
    }
    .winbtn.first {
      margin-left: 65px;
    }
    .menu {
      height: 23px;
      flex: none;
      display: flex;
      align-items: center;
      padding-left: 4px;
      background: #465063;
    }
    .menu span {
      padding: 0 10.6px;
      color: #c0c6cf;
      white-space: nowrap;
    }
    .mdi {
      margin-left: auto;
      display: flex;
      gap: 13px;
      padding-right: 12px;
    }
    .mdi .ic {
      width: 15px;
      height: 15px;
    }
    .tabs {
      flex: none;
      height: 24px;
      display: flex;
      align-items: flex-end;
      background: #232935;
    }
    .bottomtabs {
      height: 29px;
      align-items: center;
    }
    .bottomtabs .slash {
      margin: 0 7px;
    }
    .hamb {
      width: 20px;
      height: 18px;
      margin: 0 0 2px 14px;
      flex: none;
    }
    .hamb .ic {
      width: 20px;
      height: 18px;
    }
    .slash {
      flex: none;
      width: 1px;
      height: 20px;
      margin: 0 10px 1px;
      background: #4a5364;
      transform: skewX(-20deg);
    }
    .tab {
      flex: none;
      height: 22px;
      line-height: 22px;
      color: #d7dbe1;
    }
    .tab.on {
      box-sizing: border-box;
      margin-left: 7px;
      width: 238px;
      padding-left: 14px;
      background: #394252;
      clip-path: polygon(6px 0, 100% 0, calc(100% - 6px) 100%, 0 100%);
      color: #f2f3f5;
      font-size: 11.4px;
      font-weight: 600;
      white-space: pre;
    }
    .tab.on.model {
      width: 54px;
      padding-left: 15px;
      font-size: 12px;
      height: 24px;
      line-height: 24px;
    }
    .tab.layout {
      margin-left: 6px;
    }
    .tabx {
      color: #9aa2ae;
      font-weight: 400;
      font-size: 14px;
      margin-left: 2px;
    }
    .tools {
      flex: none;
      height: 81px;
      box-sizing: border-box;
      padding: 4px 0 0 3px;
      display: flex;
      flex-direction: column;
      gap: 2px;
      background: #3a4353;
    }
    .trow {
      display: flex;
      gap: 2px;
      height: 23px;
    }
    .tbar {
      display: flex;
      align-items: center;
      height: 23px;
      box-sizing: border-box;
      border: 1px solid #2c333f;
      background: #3a4353;
      flex: none;
    }
    .tbar.pad {
      padding-left: 4px;
      padding-right: 4px;
    }
    .grip {
      flex: none;
      width: 4px;
      height: 17px;
      margin: 0 0 0 1.5px;
      background: repeating-linear-gradient(#8a919c 0 1px, transparent 1px 3px);
    }
    .cell {
      flex: none;
      width: 21.3px;
      display: flex;
      justify-content: center;
    }
    .sep {
      flex: none;
      width: 1px;
      height: 19px;
      margin: 0 2.8px;
      background: #555f70;
    }
    .combo {
      flex: none;
      height: 21px;
      box-sizing: border-box;
      display: flex;
      align-items: center;
      background: #fff;
      color: #202020;
      border: 1px solid #c9ccd1;
      position: relative;
      font-size: 12px;
      white-space: nowrap;
      overflow: hidden;
    }
    .combo .ic {
      width: 17px;
      height: 17px;
      flex: none;
    }
    .chev {
      position: absolute;
      right: 8px;
      top: 5px;
      width: 5px;
      height: 5px;
      border: solid #666;
      border-width: 0 1px 1px 0;
      transform: rotate(45deg);
    }
    .c-layer {
      width: 281px;
      padding-left: 3px;
    }
    .c-color {
      width: 142px;
      padding-left: 3px;
      gap: 3px;
    }
    .swatch {
      width: 13px;
      height: 13px;
      background: #00f000;
      border: 1px solid #999;
      flex: none;
    }
    .c-lt {
      width: 151px;
      padding-left: 5px;
      margin-left: 4px;
    }
    .c-lw {
      width: 117px;
      padding-left: 5px;
      margin-left: 5px;
    }
    .c-ps {
      width: 113px;
      padding-left: 10px;
      margin-left: 5px;
      background: #f0f0f0;
      color: #9a9a9a;
    }
    .lt {
      height: 1px;
      background: #222;
      margin-right: 4px;
      flex: none;
    }
    .lt.long {
      width: 57px;
    }
    .lt.short {
      width: 33px;
    }
    .c-ts {
      width: 113px;
      margin-left: 7.5px;
      padding-left: 16px;
    }
    .mid {
      flex: 1;
      min-height: 0;
      display: flex;
    }
    .side {
      flex: none;
      width: 30px;
      display: flex;
      flex-direction: column;
      align-items: flex-start;
    }
    .side.right {
      width: 34px;
      padding-left: 5px;
      box-sizing: border-box;
    }
    .vbar {
      width: 23px;
      margin-left: 2px;
      box-sizing: border-box;
      border: 1px solid #2c333f;
      display: flex;
      flex-direction: column;
      align-items: center;
      padding-bottom: 4px;
    }
    .side.right .vbar {
      margin-left: 0;
    }
    .vgrip {
      width: 14px;
      height: 4px;
      margin: 1px 0 1px;
      background: repeating-linear-gradient(90deg, #8a919c 0 1px, transparent 1px 2px);
    }
    .vcell {
      height: 20.6px;
      display: flex;
      align-items: center;
    }
    .vcell .ic {
      width: 19px;
      height: 19px;
    }
    .canvas {
      flex: none;
      width: 1533px;
      position: relative;
    }
    .canvas > svg {
      display: block;
      width: 1533px;
      height: 1057px;
    }
    .thin {
      fill: none;
      stroke: #bdbdbd;
      stroke-width: 1.2;
    }
    .thick {
      fill: none;
      stroke: #fff;
      stroke-width: 2.5;
    }
    .thinner {
      fill: none;
      stroke: #b5b5b5;
      stroke-width: 1;
    }
    .brick {
      fill: none;
      stroke: #bf880f;
      stroke-width: 1.7;
    }
    .roof {
      fill: none;
      stroke: #cf9a18;
      stroke-width: 1.2;
    }
    .dim {
      fill: none;
      stroke: #14dc14;
      stroke-width: 1.4;
    }
    .cad {
      fill: #d2d2d2;
      font-family: 'Liberation Sans', sans-serif;
    }
    .tbt {
      fill: #d0d0d0;
      font-family: 'Noto Sans CJK SC', sans-serif;
      font-weight: 700;
      text-anchor: middle;
      dominant-baseline: central;
      white-space: pre;
    }
    .sec {
      fill: #f4f400;
      font: 15px 'Liberation Sans', sans-serif;
      text-anchor: middle;
    }
    .cube {
      fill: #9c9c9c;
      font: 18px 'Noto Sans CJK SC', sans-serif;
      text-anchor: middle;
      dominant-baseline: central;
    }
    .hist {
      position: absolute;
      left: 616px;
      top: 974px;
      display: flex;
      flex-direction: column;
      align-items: flex-start;
      gap: 3px;
    }
    .hist span {
      height: 16px;
      padding: 0 1px;
      background: rgba(98, 98, 98, 0.78);
      color: #b8b8b8;
      font: 11px/16px 'Liberation Mono', 'Noto Sans CJK SC', monospace;
      white-space: pre;
    }
    .hist b {
      font: 12.5px/16px 'Noto Sans CJK SC', sans-serif;
    }
    .cmd {
      position: absolute;
      left: 556px;
      top: 1030px;
      width: 421px;
      height: 24px;
      display: flex;
    }
    .cmd-l {
      width: 53px;
      flex: none;
      display: flex;
      align-items: center;
      gap: 4px;
      padding-left: 4px;
      box-sizing: border-box;
      background: #2d3441;
    }
    .cmd-l .ic {
      width: 14px;
      height: 14px;
    }
    .cmd-g {
      width: 3px;
      height: 16px;
      background: repeating-linear-gradient(#c3c7cd 0 2px, transparent 2px 3px);
    }
    .cmd-r {
      flex: 1;
      display: flex;
      align-items: center;
      gap: 0;
      padding-left: 3px;
      position: relative;
      background: linear-gradient(#a8a8a8 0 6px, #b3c2d8 6px 8px, #bbbbbb 8px);
      color: #7d7d7d;
      font-style: italic;
      font-size: 12px;
    }
    .cmd-r .ic {
      width: 16px;
      height: 16px;
    }
    .cmd-r .caret {
      width: 9px;
      margin-right: 5px;
    }
    .cmd-r .caret::after {
      border-top-color: #4d535c;
    }
    .cmd-tri {
      position: absolute;
      right: 2px;
      top: 9px;
      border: 4px solid transparent;
      border-bottom: 5px solid #555;
      border-top: 0;
    }
    .status {
      flex: none;
      height: 27px;
      display: flex;
      gap: 2.5px;
      padding: 1px 0 2px 3px;
      box-sizing: border-box;
      background: #232935;
    }
    .sg {
      flex: none;
      display: flex;
      align-items: center;
      background: #36404f;
      color: #d7dbe1;
      white-space: nowrap;
    }
    .sg .caret {
      width: 14px;
    }
    .sg.dec {
      margin-right: -5px;
    }
    .sblank {
      width: 453px;
    }
    .scoords {
      width: 134px;
      justify-content: flex-end;
      padding-right: 3px;
      box-sizing: border-box;
      font-size: 11.5px;
    }
    .smodel {
      width: 27px;
      justify-content: center;
    }
    .scell {
      flex: none;
      width: 23px;
      height: 24px;
      display: flex;
      align-items: center;
      justify-content: center;
    }
    .scell.wide {
      width: 25.6px;
    }
    .scell.wide:nth-child(4) {
      margin-left: 4px;
    }
    .scell.on {
      background: #5a8fc4;
    }
    .sscale {
      margin-left: 3px;
      width: 53px;
      font-size: 11px;
      letter-spacing: -0.4px;
    }
    .sdec {
      width: 58px;
      padding-left: 4px;
      box-sizing: border-box;
      flex: none;
    }
    .over {
      position: absolute;
      left: 0;
      top: 0;
      pointer-events: none;
    }
    .wm {
      fill: rgba(255, 255, 255, 0.155);
      font: 600 33px 'Open Sans', 'Noto Sans CJK SC', sans-serif;
      text-anchor: middle;
    }
    .bigzm {
      fill: rgba(232, 232, 232, 0.86);
      font: 400 63px 'Noto Sans CJK SC', sans-serif;
    }
    .idtxt {
      fill: #fff;
      stroke: #fff;
      stroke-width: 0.5;
      font: 32px 'Liberation Sans', sans-serif;
    }
  `

  private renderTitle() {
    return html`
      <div class="title">
        <div class="logo">A</div>
        <span class="caret narrow"></span>
        <span class="qat ml7">${ic('new')}</span>
        <span class="qat">${ic('open')}</span>
        <span class="qat">${ic('save')}</span>
        <span class="qat">${ic('saveas')}</span>
        <span class="qat">${ic('cloudopen')}</span>
        <span class="qat">${ic('cloudsave')}</span>
        <span class="qat">${ic('print')}</span>
        <span class="qat">${ic('undo')}</span>
        ${caret()}
        <span class="qat">${ic('redodim')}</span>
        ${caret()}
        <span class="qat tight">${ic('custom')}</span>
        <span class="qat">${ic('share')}</span>
        <span class="sharetxt">共享</span>
        <span class="apptitle">Autodesk AutoCAD 2025   主钟楼全套图纸（套无锡轻工院图签）.dwg</span>
        <span class="tri"></span>
        <span class="search">键入关键字或短语</span>
        <span class="qat">${ic('search')}</span>
        <span class="qat">${ic('user')}</span>
        <span class="login">登录</span>
        <span class="caret narrow"></span>
        <span class="qat ml4">${ic('cart')}</span>
        <span class="qat">${ic('alogo')}</span>
        <span class="caret narrow"></span>
        <span class="vsep"></span>
        <span class="qat">${ic('help')}</span>
        <span class="caret narrow"></span>
        <span class="winbtn first">${ic('min')}</span>
        <span class="winbtn">${ic('max')}</span>
        <span class="winbtn">${ic('close')}</span>
      </div>
    `
  }

  private renderTools() {
    return html`
      <div class="tools">
        <div class="trow">
          <div class="tbar"><span class="grip"></span>${TOP1A.map(tool)}</div>
          <div class="tbar">
            <span class="grip"></span>${tool('layerprops')}
            <div class="combo c-layer">
              ${ic('bulb')}${ic('sun')}${ic('freeze')}${ic('lock')}${ic('swatch')}&nbsp;0${chev()}
            </div>
            ${tool('matchlayer')}${tool('prevlayer')}${tool('layerstate')}
          </div>
          <div class="tbar">
            <span class="grip"></span>
            <div class="combo c-color"><span class="swatch"></span>绿${chev()}</div>
            <div class="combo c-lt"><span class="lt long"></span>ByLayer${chev()}</div>
            <div class="combo c-lw"><span class="lt short"></span>ByLayer${chev()}</div>
            <div class="combo c-ps">ByColor${chev()}</div>
          </div>
        </div>
        <div class="trow">
          <div class="tbar">
            <span class="grip"></span>${TOP2A.map(tool)}
            <div class="combo c-ts">副本 (2)_TCH_A${chev()}</div>
            ${tool('dimstyle')}
          </div>
          <div class="tbar pad">${TOP2B.map(tool)}</div>
        </div>
        <div class="trow">
          <div class="tbar"><span class="grip"></span>${tool('edit1')}${tool('edit2')}${tool('edit3')}</div>
        </div>
      </div>
    `
  }

  private renderCommand() {
    return html`
      <div class="hist">${HISTORY.map((s) => html`<span>${histLine(s)}</span>`)}</div>
      <div class="cmd">
        <div class="cmd-l"><span class="cmd-g"></span>${ic('close')}${ic('wrench')}</div>
        <div class="cmd-r">
          ${ic('term')}${caret()}<span>键入命令</span>
          <span class="cmd-tri"></span>
        </div>
      </div>
    `
  }

  private renderStatus() {
    return html`
      <div class="status">
        <div class="sg sblank"></div>
        <div class="sg scoords">-228641, 32498, 0</div>
        <div class="sg smodel">模型</div>
        ${STATUS.map((g) => html`<div class="sg">${g.map((n) => stat(n))}</div>`)}
        <div class="sg">
          ${stat('*anno1')}${stat('anno2')}${stat('anno3')}
          <span class="sscale">1:1 / 100%</span>${caret()}
        </div>
        <div class="sg">${stat('gear')}${caret()}${stat('plus')}</div>
        <div class="sg dec">${stat('ruler')}<span class="sdec">小数</span>${caret()}</div>
        <div class="sg">${stat('quick')}</div>
        <div class="sg">${stat('ws')}${caret()}</div>
        <div class="sg">
          ${stat('mon', true)}${stat('*perf', true)}${stat('isolate', true)}${stat('clean', true)}${stat('hamb', true)}
        </div>
      </div>
    `
  }

  override render() {
    return html`
      <div class="win">
        ${this.renderTitle()}
        <div class="menu">
          ${MENUS.map((m) => html`<span>${m}</span>`)}
          <div class="mdi">${ic('min')}${ic('restore')}${ic('close')}</div>
        </div>
        <div class="tabs">
          <span class="hamb">${ic('hamb')}</span>
          <span class="slash"></span>
          <span class="tab">开始</span>
          <span class="tab on">主钟楼全套图纸（套无锡轻工院图签） * <span class="tabx">×</span></span>
          <span class="qat ml4">${ic('plus')}</span>
          <span class="slash"></span>
        </div>
        ${this.renderTools()}
        <div class="mid">
          <div class="side">
            <div class="vbar">
              <span class="vgrip"></span>
              ${LEFT.map((n) => html`<span class="vcell">${ic(n)}</span>`)}
            </div>
          </div>
          <div class="canvas">
            <svg viewBox="32 155 1533 1057">
              <defs><clipPath id="vp"><rect x="31" y="157" width="1533" height="1036" /></clipPath></defs>
              ${drawing()}
            </svg>
            ${this.renderCommand()}
          </div>
          <div class="side right">
            <div class="vbar">
              <span class="vgrip"></span>
              ${RIGHT.map((n) => html`<span class="vcell">${ic(n)}</span>`)}
            </div>
          </div>
        </div>
        <div class="tabs bottomtabs">
          <span class="hamb">${ic('hamb')}</span>
          <span class="tab on model">模型</span>
          <span class="tab layout">布局1</span>
          <span class="slash"></span>
          <span class="qat">${ic('plus')}</span>
          <span class="slash"></span>
        </div>
        ${this.renderStatus()}
      </div>
      <svg class="over" width="1600" height="1270" viewBox="0 0 1600 1270">
        ${WATERMARKS.map(
          ([x, y]) => svg`<text class="wm" transform=${`translate(${x} ${y}) rotate(-44)`}>知末网 www.znzmo.com</text>`
        )}
        <text class="bigzm" x="1407" y="1195">知末</text>
        <text class="idtxt" x="1362" y="1242">ID: 1182209263</text>
      </svg>
    `
  }
}

declare global {
  interface HTMLElementTagNameMap {
    'app-root': AppRoot
  }
}
